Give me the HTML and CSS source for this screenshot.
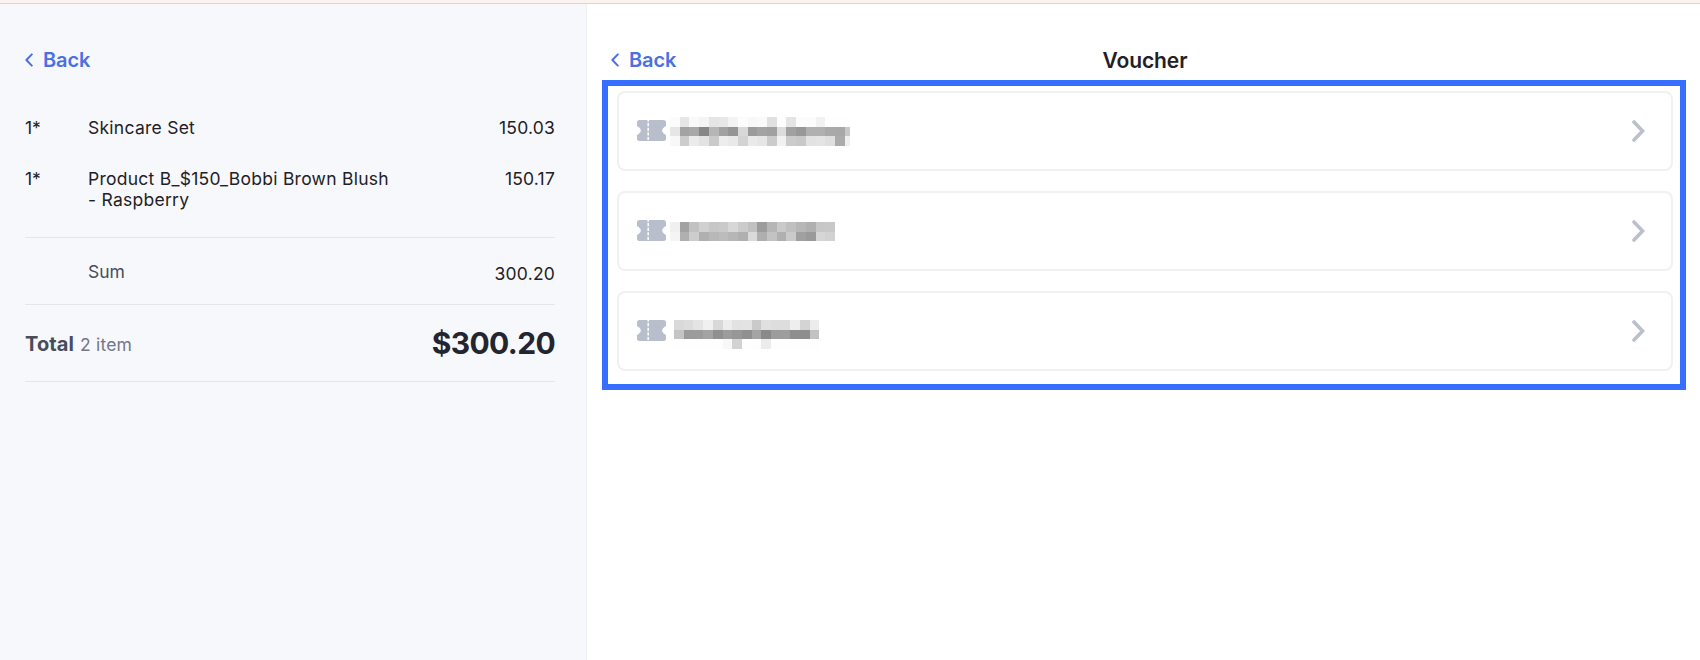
FILE: index.html
```
<!DOCTYPE html>
<html lang="en">
<head>
    <meta charset="UTF-8">
    <meta name="viewport" content="width=device-width, initial-scale=1.0">
    <title>Voucher</title>
    <link rel="stylesheet" href="styles.css">
</head>
<body>
    <svg class="symbols" width="0" height="0">
        <symbol id="icon-back" viewBox="0 0 8 14">
            <path d="M6.8 1.4 L1.4 7 L6.8 12.6" fill="none" stroke="currentColor" stroke-width="2" stroke-linecap="round" stroke-linejoin="round"/>
        </symbol>
        <symbol id="icon-next" viewBox="0 0 13 22">
            <path d="M2 2 L10.6 11 L2 20" fill="none" stroke="currentColor" stroke-width="3.6" stroke-linecap="round" stroke-linejoin="miter"/>
        </symbol>
        <symbol id="icon-ticket" viewBox="0 0 29 21">
            <path d="M2.5 0 H26.5 Q29 0 29 2.5 V6 Q25.2 8.2 25.2 10.5 Q25.2 12.8 29 15 V18.5 Q29 21 26.5 21 H2.5 Q0 21 0 18.5 V15 Q3.8 12.8 3.8 10.5 Q3.8 8.2 0 6 V2.5 Q0 0 2.5 0 Z" fill="currentColor"/>
            <path d="M11.2 0 V21" stroke="#ffffff" stroke-width="1.5" stroke-dasharray="3.2 1.4" stroke-dashoffset="1.5"/>
        </symbol>
    </svg>

    <div class="top-strip"></div>

    <div class="layout">
        <aside class="order">
            <a class="back"><svg class="back-icon"><use href="#icon-back"/></svg>Back</a>

            <div class="items">
                <div class="row">
                    <span class="qty">1*</span>
                    <span class="name">Skincare Set</span>
                    <span class="price">150.03</span>
                </div>
                <div class="row">
                    <span class="qty">1*</span>
                    <span class="name">Product B_$150_Bobbi Brown Blush<br>- Raspberry</span>
                    <span class="price">150.17</span>
                </div>
            </div>

            <div class="row sum">
                <span class="sum-label">Sum</span>
                <span class="price">300.20</span>
            </div>

            <div class="total">
                <span class="total-label">Total</span>
                <span class="total-count">2 item</span>
                <span class="total-price">$300.20</span>
            </div>
        </aside>

        <main class="content">
            <header class="header">
                <a class="back"><svg class="back-icon"><use href="#icon-back"/></svg>Back</a>
                <h1>Voucher</h1>
            </header>

            <div class="vouchers">
                <div class="voucher">
                    <svg class="ticket"><use href="#icon-ticket"/></svg>
                    <svg class="mosaic mosaic-1" data-rows="fc e6 f9 f4 e5 e7 f3 fc f8 fa e0 fe e4 fc fc f2 fe fe fe|e6 a3 a8 86 b6 a1 95 d8 9b a3 a0 dc a1 98 b0 b0 a9 a8 c8|f8 cc eb e3 ca ed e9 d3 ea e6 cb f1 cb c8 e2 e4 df ab ef"></svg>
                    <svg class="next"><use href="#icon-next"/></svg>
                </div>
                <div class="voucher">
                    <svg class="ticket"><use href="#icon-ticket"/></svg>
                    <svg class="mosaic mosaic-2" data-rows="f0 a2 c1 d0 c7 ca d7 cb c1 9c b6 ca c0 b7 b0 c7 c8|f4 b0 cd b0 b8 bc b6 b0 da af c3 b0 ca a0 9a d6 d2"></svg>
                    <svg class="next"><use href="#icon-next"/></svg>
                </div>
                <div class="voucher">
                    <svg class="ticket"><use href="#icon-ticket"/></svg>
                    <svg class="mosaic mosaic-3" data-rows="d9 dc e4 f0 d8 ec e2 e3 ca e0 dd dd ee d4 ec|c4 9b 9c a3 90 9c 97 90 a4 8a 9c 9d 8e 8e c2|fe fe fe fe fe f8 d2 fe fd ec fe fe fe fe fe"></svg>
                    <svg class="next"><use href="#icon-next"/></svg>
                </div>
            </div>
        </main>
    </div>

    <script>
        // Fill the masked voucher names with grey blocks
        const size = 9.7;
        document.querySelectorAll('.mosaic').forEach(function (svg) {
            svg.dataset.rows.split('|').forEach(function (row, y) {
                row.split(' ').forEach(function (tone, x) {
                    const rect = document.createElementNS('http://www.w3.org/2000/svg', 'rect');
                    rect.setAttribute('x', x * size);
                    rect.setAttribute('y', y * size);
                    rect.setAttribute('width', size);
                    rect.setAttribute('height', size);
                    rect.setAttribute('fill', '#' + tone + tone + tone);
                    svg.appendChild(rect);
                });
            });
        });
    </script>
</body>
</html>
```
FILE: styles.css
```
* {
    box-sizing: border-box;
}

body {
    display: flex;
    flex-direction: column;
    height: 100vh;
    margin: 0;
    overflow: hidden;
    font-family: Inter, "Liberation Sans", sans-serif;
    font-size: 17.5px;
    color: #1f2126;
    background-color: #ffffff;
}

.symbols {
    display: none;
}

.top-strip {
    flex: none;
    height: 4px;
    background-color: #fdf3ee;
    border-bottom: 1px solid #d9d5d8;
}

.layout {
    display: flex;
    flex: 1;
}

.order {
    width: 587px;
    padding: 36px 31px 0 25px;
    background-color: #f7f8fc;
    border-right: 1px solid #eef0f5;
}

.back {
    display: flex;
    align-items: center;
    height: 40px;
    font-size: 20px;
    font-weight: 600;
    letter-spacing: -0.1px;
    color: #4a70e4;
}

.back-icon {
    width: 8px;
    height: 14px;
    margin-right: 10px;
}

.items {
    height: 158px;
    padding-top: 37px;
    border-bottom: 1px solid #e4e6eb;
}

.row {
    display: flex;
    line-height: 21px;
}

.items .row + .row {
    margin-top: 30px;
}

.qty {
    width: 63px;
}

.name {
    flex: 1;
    letter-spacing: 0.26px;
}

.price {
    margin-left: auto;
    letter-spacing: 0.2px;
}

.sum {
    height: 67px;
    padding-top: 23px;
    border-bottom: 1px solid #e4e6eb;
}

.sum .price {
    padding-top: 2px;
}

.sum-label {
    margin-left: 63px;
    color: #484c5b;
}

.total {
    display: flex;
    align-items: center;
    height: 77px;
    border-bottom: 1px solid #e4e6eb;
}

.total-label {
    padding-top: 1px;
    font-size: 20px;
    font-weight: 700;
    letter-spacing: 0.1px;
    color: #484c5b;
}

.total-count {
    margin-left: 6px;
    padding-top: 2px;
    letter-spacing: 0.2px;
    color: #737789;
}

.total-price {
    margin-left: auto;
    font-size: 30px;
    font-weight: 700;
    letter-spacing: -0.65px;
    color: #23252f;
}

.content {
    flex: 1;
    padding: 36px 14px 0 15px;
}

.header {
    display: grid;
    grid-template-columns: 1fr auto 1fr;
    align-items: center;
    height: 40px;
    padding: 0 7px 0 9px;
}

.header h1 {
    margin: 0;
    font-size: 21px;
    font-weight: 600;
    letter-spacing: -0.1px;
}

.vouchers {
    display: flex;
    flex-direction: column;
    gap: 20px;
    height: 310px;
    padding: 5px 7px 0 9px;
    border: 6px solid #366fff;
}

.voucher {
    display: flex;
    align-items: center;
    height: 80px;
    padding: 0 26px 0 18px;
    border: 2px solid #f0f1f5;
    border-radius: 8px;
}

.ticket {
    width: 29px;
    height: 21px;
    margin-bottom: 1px;
    color: #b9becd;
}

.mosaic {
    shape-rendering: crispEdges;
}

.mosaic-1 {
    width: 180px;
    height: 29px;
    margin-left: 4px;
}

.mosaic-2 {
    width: 165px;
    height: 20px;
    margin: 1px 0 0 4px;
}

.mosaic-3 {
    width: 145px;
    height: 29px;
    margin: 6px 0 0 8px;
}

.next {
    width: 13px;
    height: 22px;
    margin-left: auto;
    color: #bbc0cc;
}
```
